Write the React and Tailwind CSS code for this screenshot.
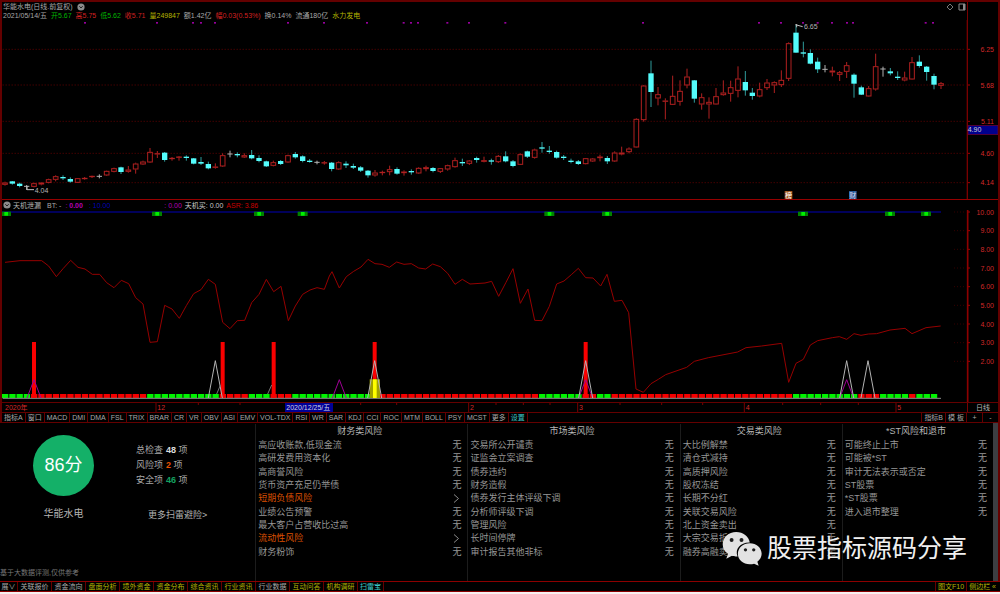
import { useState } from 'react'
import clsx from 'clsx'

// Candles: [kind, high, body top, body bottom, low]
// kind: r = up (hollow), c = down (solid), w = unchanged
const STEP = 21.77;

const earlyCandles = [
  ['r', 155, 158, 164, 167], ['c', 153, 154, 161, 164], ['c', 158, 161, 168, 172], ['w', 165, 169, 169, 180],
  ['r', 158, 160, 170, 172], ['r', 157, 158, 163, 166], ['r', 146, 148, 158, 160], ['r', 136, 139, 149, 154],
  ['c', 136, 141, 144, 150], ['c', 142, 147, 155, 158], ['r', 144, 145, 158, 159], ['r', 141, 144, 147, 149],
  ['r', 137, 138, 141, 144], ['w', 133, 139, 139, 145], ['r', 122, 123, 136, 138], ['r', 113, 115, 125, 127],
  ['c', 110, 112, 126, 132], ['r', 108, 119, 125, 128], ['r', 98, 101, 118, 131], ['r', 92, 95, 103, 105],
  ['r', 54, 66, 97, 99], ['r', 63, 70, 73, 84], ['c', 66, 68, 90, 95], ['r', 81, 84, 87, 92],
  ['r', 78, 80, 83, 92], ['c', 76, 80, 84, 92], ['c', 84, 85, 101, 103], ['c', 81, 96, 101, 105],
  ['c', 95, 102, 115, 118], ['r', 100, 110, 113, 116], ['r', 70, 76, 109, 111], ['w', 62, 72, 72, 82],
  ['c', 67, 72, 75, 82], ['r', 70, 76, 82, 84], ['c', 60, 75, 85, 88], ['c', 76, 84, 93, 97],
  ['c', 92, 94, 109, 111], ['r', 92, 97, 107, 109], ['c', 90, 93, 102, 105], ['r', 74, 76, 97, 99],
  ['c', 66, 72, 82, 86], ['c', 76, 79, 93, 97], ['c', 87, 92, 94, 98], ['w', 92, 97, 97, 103],
  ['r', 93, 97, 99, 104], ['c', 96, 98, 117, 124], ['r', 94, 97, 118, 120], ['c', 94, 101, 106, 114],
  ['c', 101, 108, 113, 117], ['c', 108, 112, 122, 126], ['c', 120, 122, 136, 143], ['r', 120, 128, 136, 140],
  ['r', 122, 126, 129, 136], ['r', 107, 118, 126, 136], ['c', 112, 117, 131, 134], ['r', 121, 125, 129, 137],
  ['c', 118, 123, 126, 134], ['r', 112, 114, 130, 132], ['r', 107, 112, 117, 124], ['c', 111, 114, 123, 127],
  ['r', 114, 115, 125, 129], ['r', 104, 106, 118, 122], ['r', 83, 91, 111, 113], ['c', 86, 96, 98, 108],
  ['r', 90, 92, 101, 105], ['c', 80, 84, 90, 98], ['r', 80, 91, 95, 97], ['c', 86, 91, 94, 104],
  ['r', 75, 78, 96, 99], ['c', 64, 79, 94, 97], ['c', 90, 94, 108, 112], ['r', 70, 73, 104, 105],
  ['c', 62, 64, 80, 84], ['r', 56, 59, 83, 86], ['c', 36, 52, 54, 68], ['c', 48, 62, 66, 71],
  ['c', 62, 66, 83, 86], ['c', 75, 80, 84, 90], ['c', 86, 92, 95, 100], ['c', 90, 94, 102, 105],
  ['r', 84, 85, 102, 103], ['r', 84, 86, 94, 96], ['r', 74, 80, 84, 94], ['c', 78, 84, 94, 102],
  ['r', 64, 68, 94, 96], ['r', 50, 68, 73, 76], ['r', 52, 56, 66, 70],
];

const lateCandles = [
  ['r', 325, 327, 412, 413], ['r', 225, 227, 330, 335], ['c', 152, 190, 246, 291], ['r', 231, 253, 265, 286],
  ['r', 265, 272, 275, 328], ['r', 197, 258, 284, 285], ['r', 211, 243, 275, 287], ['r', 176, 200, 226, 235],
  ['c', 210, 211, 266, 278], ['r', 250, 262, 283, 299], ['r', 262, 276, 283, 326], ['r', 234, 259, 283, 284],
  ['r', 211, 248, 255, 257], ['r', 212, 232, 251, 275], ['r', 169, 206, 242, 262], ['c', 183, 216, 241, 257],
  ['c', 234, 248, 258, 269], ['r', 218, 238, 259, 262], ['r', 207, 218, 234, 240], ['r', 214, 217, 226, 249],
  ['r', 181, 210, 225, 231], ['r', 97, 100, 206, 213], ['c', 45, 68, 128, 128], ['c', 95, 127, 131, 142],
  ['c', 118, 129, 161, 163], ['c', 143, 155, 178, 189], ['w', 165, 178, 178, 187], ['r', 170, 182, 187, 199],
  ['r', 183, 187, 194, 213], ['r', 156, 166, 185, 204], ['c', 190, 194, 221, 263], ['c', 227, 232, 254, 255],
  ['r', 228, 235, 259, 260], ['r', 131, 169, 238, 242], ['w', 170, 177, 177, 200], ['c', 174, 184, 190, 196],
  ['c', 184, 200, 204, 210], ['r', 185, 203, 211, 214], ['r', 141, 157, 208, 209], ['c', 136, 155, 168, 173],
  ['c', 168, 170, 186, 212], ['c', 191, 198, 224, 238], ['r', 216, 220, 227, 237],
];

const shift = (rows, dy) => rows.map(([kind, ...ys]) => [kind, ...ys.map((y) => y + dy)]);
const candles = [...shift(earlyCandles, 390), ...shift(lateCandles, 30)];

const priceTicks = [
  ['6.25', 148], ['5.68', 255], ['5.11', 364], ['4.60', 460], ['4.14', 548],
];
const signalDots = [
  255, 471, 579, 603, 645, 864, 972, 1101, 1211, 1233, 1254, 1342, 1407, 1516,
  1929, 2277, 2343, 2409, 2453, 2496, 2541, 2559, 2777, 2799,
];

const asrLine = '15,67 60,62 125,62 146,78 169,110 190,85 212,61 234,82 255,87 277,103 299,103 320,128 342,143 364,121 386,131 407,173 429,192 450,307 472,305 494,196 516,207 538,235 559,197 581,161 603,149 625,118 646,133 668,247 690,266 712,242 734,241 755,188 777,163 799,118 821,155 843,139 865,242 886,198 908,163 930,150 951,143 973,148 988,108 996,95 1018,144 1039,110 1061,94 1083,81 1104,58 1125,71 1146,73 1168,82 1190,66 1212,73 1234,71 1256,84 1277,87 1298,72 1321,80 1343,100 1365,133 1387,118 1410,132 1455,129 1475,124 1496,169 1518,127 1539,86 1561,190 1584,147 1604,241 1626,242 1648,199 1670,132 1692,123 1714,104 1735,85 1757,113 1779,114 1802,138 1821,103 1843,184 1866,181 1886,218 1908,447 1930,457 1953,431 1975,418 1997,404 2060,382 2083,364 2125,353 2213,336 2238,323 2285,318 2345,310 2366,427 2388,370 2410,358 2431,315 2453,302 2497,293 2518,290 2540,298 2562,281 2583,286 2605,282 2630,281 2670,270 2715,265 2736,281 2778,263 2822,258';

// Trend ribbon, [color, number of bars]
const ribbonRuns = [
  ['g', 4], ['r', 16], ['g', 10], ['r', 4], ['g', 3], ['r', 3], ['g', 11], ['r', 23], ['g', 6],
  ['r', 2], ['g', 2], ['r', 25], ['g', 9], ['r', 3], ['g', 4], ['r', 1], ['g', 3],
];
const ribbon = ribbonRuns.flatMap(([color, n]) => Array(n).fill(color));

const greenMarks = [18, 471, 777, 908, 1648, 1821, 2409, 2670, 2778];
const redBars = [102, 668, 821, 1124, 1757];
const whitePeaks = [646, 1124, 1757, 2540, 2604];
const purplePeaks = [102, 1018, 1757, 2540];

const quote = [
  ['2021/05/14/五', 'text-[#a8a8a8]'],
  ['开5.67', 'text-[#00b400]'],
  ['高5.75', 'text-[#d22020]'],
  ['低5.62', 'text-[#00b400]'],
  ['收5.71', 'text-[#d22020]'],
  ['量249847', 'text-[#b4b400]'],
  ['额1.42亿', 'text-[#a8a8a8]'],
  ['幅0.03(0.53%)', 'text-[#d22020]'],
  ['换0.14%', 'text-[#a8a8a8]'],
  ['流通180亿', 'text-[#a8a8a8]'],
  ['水力发电', 'text-[#b4b400]'],
];

const indicatorTabs = [
  '指标A', '窗口', 'MACD', 'DMI', 'DMA', 'FSL', 'TRIX', 'BRAR', 'CR', 'VR', 'OBV', 'ASI', 'EMV', 'VOL-TDX',
  'RSI', 'WR', 'SAR', 'KDJ', 'CCI', 'ROC', 'MTM', 'BOLL', 'PSY', 'MCST', '更多', '设置',
];

const riskGroups = [
  {
    title: '财务类风险',
    items: ['高应收账款,低现金流', '高研发费用资本化', '高商誉风险', '货币资产充足仍举债', '短期负债风险', '业绩公告预警', '最大客户占营收比过高', '流动性风险', '财务粉饰'],
    hits: ['短期负债风险', '流动性风险'],
  },
  {
    title: '市场类风险',
    items: ['交易所公开谴责', '证监会立案调查', '债券违约', '财务造假', '债券发行主体评级下调', '分析师评级下调', '管理风险', '长时间停牌', '审计报告其他非标'],
    hits: [],
  },
  {
    title: '交易类风险',
    items: ['大比例解禁', '清仓式减持', '高质押风险', '股权冻结', '长期不分红', '关联交易风险', '北上资金卖出', '大宗交易折价', '融券高融卖出'],
    hits: [],
  },
  {
    title: '*ST风险和退市',
    items: ['可能终止上市', '可能被*ST', '审计无法表示或否定', 'ST股票', '*ST股票', '进入退市整理'],
    hits: [],
  },
];

const footerTabs = [
  ['关联报价', 'text-[#a8a8a8]'], ['资金流向', 'text-[#a8a8a8]'], ['盘面分析', 'text-[#b4b400]'],
  ['境外资金', 'text-[#b4b400]'], ['资金分布', 'text-[#b4b400]'], ['综合资讯', 'text-[#b4b400]'],
  ['行业资讯', 'text-[#b4b400]'], ['行业数据', 'text-[#a8a8a8]'], ['互动问答', 'text-[#b4b400]'],
  ['机构调研', 'text-[#b4b400]'],
];

function MenuDot() {
  return (
    <svg viewBox="0 0 8 8" className="w-2 h-2 shrink-0">
      <circle cx="4" cy="4" r="3.6" fill="#8c8c8c" />
      <path d="M2.3 3.2 4 5l1.7-1.8" fill="none" stroke="#222" strokeWidth="1" />
    </svg>
  );
}

function Candle({ x, data }) {
  const [kind, high, top, bottom, low] = data;
  if (kind === 'w') {
    return <path d={`M${x} ${high}V${low}M${x - 8} ${top}H${x + 8}`} stroke="#b0b0b0" strokeWidth="3" />;
  }
  if (kind === 'c') {
    return (
      <g>
        <path d={`M${x} ${high}V${low}`} stroke="#2f9c9c" strokeWidth="3" />
        <rect x={x - 8} y={top} width="16" height={Math.max(4, bottom - top)} fill="#54fcfc" />
      </g>
    );
  }
  return (
    <g stroke="#b02020" strokeWidth="3" fill="none">
      <path d={`M${x} ${high}V${top}M${x} ${bottom}V${low}`} />
      <rect x={x - 7} y={top + 1} width="14" height={Math.max(1, bottom - top - 2)} />
    </g>
  );
}

function PriceChart() {
  return (
    <svg viewBox="6 60 2988 537" className="block w-full" fontSize="21">
      {priceTicks.map(([label, y]) => (
        <g key={label}>
          <path d={`M8 ${y}H2895`} stroke="#640000" strokeWidth="3" strokeDasharray="3 6" />
          <path d={`M2901 ${y}H2910`} stroke="#a00000" strokeWidth="3" />
          <text x="2982" y={y + 8} textAnchor="end" fill="#d02828">{label}</text>
        </g>
      ))}
      <path d="M2902 60V597" stroke="#780000" strokeWidth="4" />
      {signalDots.map((x) => (
        <rect key={x} x={x - 3} y="66" width="6" height="5" fill="#96009c" />
      ))}
      {candles.map((c, i) => (
        <Candle key={i} x={Math.round(15 + i * STEP)} data={c} />
      ))}

      {/* High and low of the visible range */}
      <path d="M2390 82V72M2386 74L2408 80" stroke="#c0c0c0" strokeWidth="3" fill="none" />
      <text x="2412" y="88" fill="#b4b4b4">6.65</text>
      <path d="M81 558V569H102" stroke="#c0c0c0" strokeWidth="3" fill="none" />
      <text x="104" y="578" fill="#b4b4b4">4.04</text>

      {/* Cursor price */}
      <rect x="2904" y="376" width="90" height="28" fill="#00008c" stroke="#780028" strokeWidth="2" />
      <text x="2903" y="397" fill="#d0d0d0">4.90</text>

      <rect x="2354" y="573" width="23" height="24" fill="#a0561e" />
      <text x="2355" y="593" fill="#fff">榜</text>
      <rect x="2547" y="573" width="23" height="24" fill="#285a96" />
      <text x="2548" y="593" fill="#dde">财</text>
    </svg>
  );
}

function IndicatorChart() {
  return (
    <svg viewBox="6 -90 2988 576" className="block w-full" fontSize="21">
      {[10, 9, 8, 7, 6, 5, 4, 3, 2].map((v, i) => (
        <g key={v}>
          <path d={`M2862 ${i * 56 - 84}H2895`} stroke="#500000" strokeWidth="2" strokeDasharray="3 6" />
          <path d={`M2901 ${i * 56 - 84}H2910`} stroke="#a00000" strokeWidth="3" />
          <text x="2982" y={i * 56 - 76} textAnchor="end" fill="#d02828">{v.toFixed(2)}</text>
        </g>
      ))}
      <path d="M2903 -90V486" stroke="#8c0000" strokeWidth="5" />
      <path d="M6 -84H2823" stroke="#00007a" strokeWidth="5" />
      {greenMarks.map((x) => (
        <g key={x}>
          <rect x={x - 15} y="-85" width="30" height="13" fill="#008200" />
          <rect x={x - 5} y="-84" width="11" height="11" fill="#00f000" />
        </g>
      ))}

      <polyline points={asrLine} fill="none" stroke="#960000" strokeWidth="3" />

      {ribbon.map((color, i) => (
        <rect
          key={i}
          x={6 + i * STEP}
          y="462"
          width="19"
          height="12"
          fill={color === 'g' ? '#00f400' : '#f40000'}
        />
      ))}
      <path d="M8 475H2823" stroke="#8c8c8c" strokeWidth="3" />
      {redBars.map((x) => (
        <rect key={x} x={x - 6} y="306" width="12" height="168" fill="#fa0000" />
      ))}
      <rect x="1109" y="418" width="31" height="56" fill="#a0a000" />
      <rect x="1119" y="418" width="11" height="56" fill="#ffff00" />
      <g fill="none" strokeWidth="3">
        {purplePeaks.map((x) => (
          <path key={x} d={`M${x - 21} 474L${x} 419L${x + 21} 474`} stroke="#a00096" />
        ))}
        {whitePeaks.map((x) => (
          <path key={x} d={`M${x - 21} 474L${x} 362L${x + 21} 474`} stroke="#b4b4b4" />
        ))}
        <path d="M650 462L661 436M803 462L815 435" stroke="#787878" />
      </g>
    </svg>
  );
}

function DateAxis() {
  const months = [['12', 468], ['2', 1406], ['3', 1733], ['4', 2233], ['5', 2688]];
  return (
    <svg viewBox="6 0 2895 27" className="block flex-1 min-w-0" fontSize="21">
      <text x="15" y="22" fill="#d02828">2020年</text>
      {months.map(([label, x]) => (
        <g key={label}>
          <path d={`M${x} 0V27`} stroke="#780000" strokeWidth="3" />
          <text x={x + 4} y="22" fill="#d02828">{label}</text>
        </g>
      ))}
      {[595, 720, 1082, 1190, 1488, 1570, 1650, 1860, 1985, 2108, 2348, 2462, 2575].map((x) => (
        <path key={x} d={`M${x} 0V6`} stroke="#780000" strokeWidth="3" />
      ))}
      <rect x="855" y="0" width="144" height="27" fill="#000096" />
      <text x="859" y="22" fill="#d0d0e0">2020/12/25/五</text>
    </svg>
  );
}

function RiskColumn({ group }) {
  return (
    <section className="border-l border-[#1c1c1c] pl-0.5 pr-1.5">
      <h2 className="h-[14px] leading-[14px] text-center text-[#b4b4b4] mb-px">{group.title}</h2>
      <ul className="grid grid-rows-9 h-[120px] items-center text-[#969696]">
        {group.items.map((item) => {
          const hit = group.hits.includes(item);
          return (
            <li key={item} className="flex justify-between leading-[13px] whitespace-nowrap">
              <span className={clsx(hit && 'text-[#dc5000]')}>{item}</span>
              {hit ? (
                <svg viewBox="0 0 9 13" className="w-[9px] h-[13px]">
                  <path d="M2 2.5 6.5 6.5 2 10.5" fill="none" stroke="#8c8c8c" strokeWidth="1" />
                </svg>
              ) : (
                <span>无</span>
              )}
            </li>
          );
        })}
      </ul>
    </section>
  );
}

function Watermark() {
  return (
    <div className="absolute right-[31px] bottom-[15px] flex items-center gap-1 text-[#f0f0f0]">
      <svg viewBox="155 328 124 106" className="w-[41px] h-[35px]">
        <path
          d="M198 331c-23 0-41 16-41 37 0 12 6 22 16 29l-5 15 17-9c6 2 11 2 17 2-9-23 9-43 37-42-3-19-20-32-41-32z"
          fill="#e2e2e2"
        />
        <path
          d="M239 365c-20 0-36 14-36 32s16 32 36 32c5 0 9-1 13-2l14 6-4-12c8-6 13-14 13-24 0-18-16-32-36-32z"
          fill="#e2e2e2"
        />
        <g fill="#1e1e1e">
          <circle cx="184" cy="355" r="6" />
          <circle cx="214" cy="355" r="6" />
          <circle cx="226" cy="385" r="5" />
          <circle cx="251" cy="385" r="5" />
        </g>
      </svg>
      <span className="text-[25px] leading-[35px] [text-shadow:1px_1px_2px_#000]">股票指标源码分享</span>
    </div>
  );
}

export default function App() {
  const [tab, setTab] = useState('设置');

  return (
    <div className="bg-[#f8f0f0] min-h-screen font-['Liberation_Sans','Noto_Sans_CJK_SC',sans-serif] text-[7px] leading-[9px] text-[#a8a8a8]">
      <div className="bg-black">
        <div className="border-x-2 border-t-2 border-[#640000]">
          {/* Quote header */}
          <header className="flex justify-between h-[18px] pl-px">
            <div>
              <div className="flex items-center gap-1">
                <h1>华能水电(日线.前复权)</h1>
                <MenuDot />
              </div>
              <p className="flex gap-1 whitespace-nowrap">
                {quote.map(([text, color]) => (
                  <span key={text} className={color}>{text}</span>
                ))}
              </p>
            </div>
            <div className="flex gap-1 border-r border-[#780000] pt-px pr-px mr-[30px]">
              <svg viewBox="0 0 8 8" className="w-2 h-2" fill="none" stroke="#787878">
                <path d="M4 1 7 4 4 7 1 4z" />
              </svg>
              <svg viewBox="0 0 8 8" className="w-2 h-2" fill="none" stroke="#8c8c8c">
                <path d="M1 1h6v6H1z" />
                <path d="M6 1v6" strokeWidth="2" />
              </svg>
            </div>
          </header>
          <PriceChart />

          {/* Indicator panel */}
          <div className="flex items-center border-t border-[#960000] h-[11px] whitespace-nowrap pl-px">
            <MenuDot />
            <span className="text-[#b4b4b4] ml-0.5">天机泄漏</span>
            <span className="ml-1.5">BT: -</span>
            <span className="text-[#b400b4] ml-1">: <b>0.00</b></span>
            <span className="text-[#0000b4] ml-1.5">: 10.00</span>
            <span className="text-[#b400b4] ml-[54px]">: 0.00</span>
            <span className="text-[#c8c8c8] ml-[3px]">天机买: 0.00</span>
            <span className="text-[#c80000] ml-[3px]">ASR: 3.86</span>
          </div>
          <IndicatorChart />
          <div className="flex border-t border-[#640000]">
            <DateAxis />
            <button className="w-[31px] text-center border-l border-[#780000] text-[#b4b4b4]">日线</button>
          </div>

          <nav className="flex border-y border-[#640000] h-[11px] text-[#a8a8a8]">
            {indicatorTabs.map((name) => (
              <button
                key={name}
                onClick={() => setTab(name)}
                className={clsx('px-0.5 border-r border-[#640000] whitespace-nowrap', name === tab && 'text-[#3cc8c8]')}
              >
                {name}
              </button>
            ))}
            <div className="flex ml-auto">
              <button className="px-0.5 border-l border-[#640000]">指标B</button>
              <button className="px-0.5 border-l border-[#640000]">模 板</button>
              <button className="w-4 border-l border-[#640000]">+</button>
              <button className="w-4 border-l border-[#640000]">-</button>
            </div>
          </nav>
        </div>

        {/* Risk scan */}
        <main className="relative flex border-r-2 border-[#640000] text-[9px]">
          <div className="flex-1 grid grid-cols-[255fr_212fr_212fr_162fr_151fr] h-[158px] pt-px">
            <section className="flex flex-col justify-between">
              <div className="flex pt-[11px] pl-[33px]">
                <div className="flex flex-col items-center gap-3">
                  <div className="w-[61px] h-[61px] rounded-full bg-[#14b068] text-white text-[18px] leading-[61px] text-center">
                    86分
                  </div>
                  <span className="text-[10px] leading-3 text-[#b4b4b4]">华能水电</span>
                </div>
                <div className="pl-[42px] pt-2">
                  <dl className="grid grid-cols-[auto_1fr] gap-x-[3px] leading-[15px]">
                    <dt>总检查</dt>
                    <dd><b className="text-[#dcdcdc]">48</b> 项</dd>
                    <dt>风险项</dt>
                    <dd><b className="text-[#e65000]">2</b> 项</dd>
                    <dt>安全项</dt>
                    <dd><b className="text-[#14a060]">46</b> 项</dd>
                  </dl>
                  <a href="#scan" className="block mt-[21px] ml-3 leading-3 text-[#b4b4b4]">更多扫雷避险&gt;</a>
                </div>
              </div>
              <p className="mb-[3px] text-[7px] leading-[10px] text-[#787878]">基于大数据评测,仅供参考</p>
            </section>
            {riskGroups.map((group) => (
              <RiskColumn key={group.title} group={group} />
            ))}
          </div>
          <div className="w-[5px] bg-[#3c3e42]" />
          <Watermark />
        </main>

        <footer className="flex border-y border-[#8c0000] h-[11px]">
          <button className="w-[18px] border-r border-[#640000] text-[#a8a8a8] whitespace-nowrap">展∨</button>
          {footerTabs.map(([name, color]) => (
            <button key={name} className={clsx('w-[34px] border-r border-[#640000]', color)}>{name}</button>
          ))}
          <button className="px-0.5 border-r border-[#640000] text-[#3cc8c8]">扫雷宝</button>
          <div className="flex ml-auto pr-0.5 text-[#b4b400]">
            <button className="px-0.5 border-l border-[#640000]">图文F10</button>
            <button className="px-0.5 border-l border-[#640000]">侧边栏 «</button>
          </div>
        </footer>
      </div>
    </div>
  );
}
